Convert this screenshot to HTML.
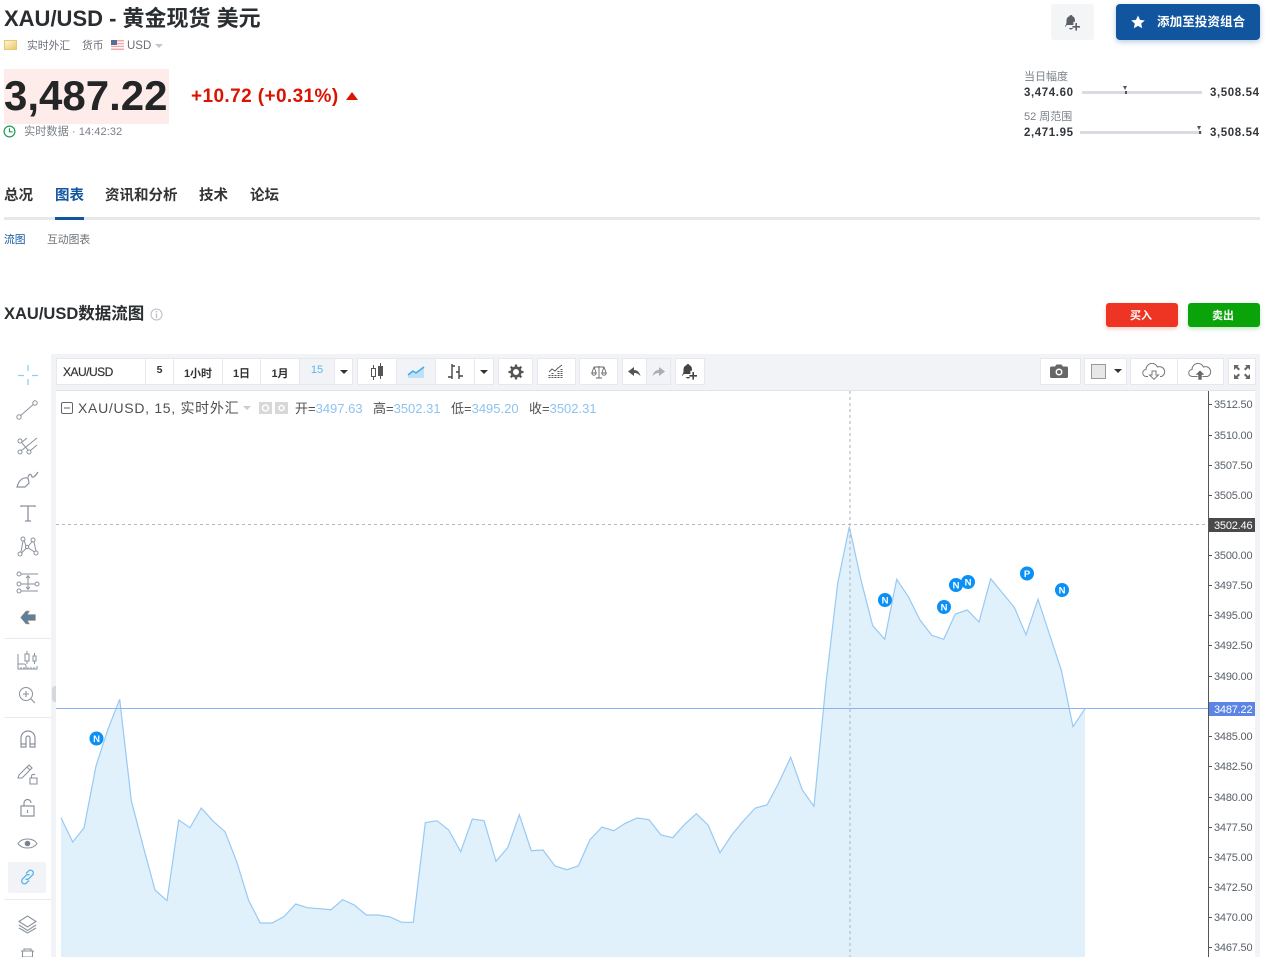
<!DOCTYPE html>
<html lang="zh"><head><meta charset="utf-8"><title>XAU/USD</title>
<style>
*{box-sizing:border-box}
html,body{margin:0;padding:0;width:1265px;height:957px;overflow:hidden;background:#fff}
body{position:relative;font-family:"Liberation Sans","Noto Sans CJK SC",sans-serif;color:#232526}
.a{position:absolute;white-space:nowrap}
.b{position:absolute;top:358px;height:27px;background:#fff;border:1px solid #e6e8ee;display:flex;align-items:center;justify-content:center;font-size:11px;color:#333;font-weight:bold}
.b svg{display:block}
.t{position:absolute;left:1214px;font-size:11px;line-height:12px;color:#5a6068;letter-spacing:-.2px}
.k{position:absolute;left:1208px;width:4px;height:1px;background:#555}
.l{position:absolute;left:0;top:0}
.lab{font-size:14px;color:#4f4f4f}
.v{color:#8fc3f0}
.s{font-size:11.5px;line-height:14px;font-weight:bold;color:#33373b;letter-spacing:.6px}
.m{font-size:11px;line-height:14px;color:#7b8087}
.tab{font-size:14.5px;line-height:18px;font-weight:bold;color:#333}
</style></head><body>

<div class="a" style="left:4px;top:6px;font-size:22px;line-height:25px;font-weight:bold;color:#2a2e31">XAU/USD - 黄金现货 美元</div>
<svg class="a" style="left:4px;top:40px" width="13" height="10"><defs><linearGradient id="g" x1="0" y1="0" x2="1" y2="1"><stop offset="0" stop-color="#fff8dc"/><stop offset="1" stop-color="#e9c766"/></linearGradient></defs><rect x=".5" y=".5" width="12" height="9" fill="url(#g)" stroke="#e5c870"/></svg>
<div class="a" style="left:27px;top:39px;font-size:10.8px;line-height:14px;color:#6a6f75">实时外汇</div>
<div class="a" style="left:82px;top:39px;font-size:10.8px;line-height:14px;color:#6a6f75">货币</div>
<svg class="a" style="left:111px;top:40px" width="13" height="10"><rect width="13" height="10" fill="#f3a6a6"/><rect y="1.5" width="13" height="1.4" fill="#fff"/><rect y="4.3" width="13" height="1.4" fill="#fff"/><rect y="7.1" width="13" height="1.4" fill="#fff"/><rect width="6" height="5" fill="#5a6a9a"/></svg>
<div class="a" style="left:127px;top:39px;font-size:11.5px;line-height:14px;color:#6a6f75">USD</div>
<div class="a" style="left:155px;top:44px;width:0;height:0;border:4px solid transparent;border-top:4px solid #c3c7cd;border-bottom:0"></div>

<div class="a" style="left:4px;top:69px;width:165px;height:55px;background:#fdecea"></div>
<div class="a" style="left:4px;top:72px;font-size:42px;line-height:48px;font-weight:bold;color:#232526">3,487.22</div>
<div class="a" style="left:191px;top:85px;font-size:19px;line-height:24px;color:#d91400;font-weight:bold;letter-spacing:.4px">+10.72 (+0.31%)</div>
<div class="a" style="left:346px;top:92px;width:0;height:0;border:6px solid transparent;border-bottom:8px solid #d91400;border-top:0"></div>
<svg class="a" style="left:3px;top:125px" width="13" height="13" fill="none" stroke="#1f9d55" stroke-width="1.2"><circle cx="6.500" cy="6.500" r="5.400"/><path d="M6.500 3.200V6.800H9.600"/></svg>
<div class="a" style="left:24px;top:125px;font-size:11.2px;line-height:14px;color:#7b8087">实时数据 · 14:42:32</div>

<div class="a" style="left:1051px;top:4px;width:43px;height:36px;background:#f4f5f6;border-radius:3px"></div>
<svg class="a" style="left:1064px;top:14px" width="18" height="17" fill="#5b5f66"><path d="M7 1c.9 0 1.400.6 1.500 1.300C10.500 3 11 4.800 11 7v.8H9.400V11H3L1 13v-1c1-1 1.500-2 1.500-5 0-2.400.8-4 3-4.700C5.600 1.600 6.100 1 7 1zM5 14h4c-.3 1-1 1.500-2 1.500S5.300 15 5 14z"/><path d="M13 9v3h3v1.600h-3v3h-1.600v-3h-3V12h3V9z"/></svg>
<div class="a" style="left:1116px;top:4px;width:144px;height:36px;background:#10559e;border-radius:4px;box-shadow:0 2px 6px rgba(16,85,158,.3)"></div>
<svg class="a" style="left:1131px;top:15px" width="14" height="14" fill="#fff"><path d="M7 .5l2 4.400 4.800.5-3.600 3.200 1 4.700L7 10.900l-4.200 2.400 1-4.700L.2 5.400 5 4.900z"/></svg>
<div class="a" style="left:1157px;top:14px;font-size:12.6px;line-height:16px;font-weight:bold;color:#fff">添加至投资组合</div>

<div class="a m" style="left:1024px;top:70px">当日幅度</div>
<div class="a s" style="left:1024px;top:86px">3,474.60</div>
<div class="a" style="left:1082px;top:91px;width:120px;height:3px;background:#d9dbe0"></div>
<div class="a" style="left:1123px;top:86px;width:0;height:0;border:2.500px solid transparent;border-top:4px solid #555;border-bottom:0"></div>
<div class="a" style="left:1125px;top:91px;width:1.500px;height:3px;background:#555"></div>
<div class="a s" style="left:1210px;top:86px">3,508.54</div>
<div class="a m" style="left:1024px;top:110px">52 周范围</div>
<div class="a s" style="left:1024px;top:126px">2,471.95</div>
<div class="a" style="left:1080px;top:131px;width:122px;height:3px;background:#d9dbe0"></div>
<div class="a" style="left:1197px;top:126px;width:0;height:0;border:2.500px solid transparent;border-top:4px solid #555;border-bottom:0"></div>
<div class="a" style="left:1199px;top:131px;width:2px;height:3px;background:#555"></div>
<div class="a s" style="left:1210px;top:126px">3,508.54</div>

<div class="a" style="left:4px;top:217px;width:1256px;height:3px;background:#e6e9eb"></div>
<div class="a" style="left:55px;top:217px;width:29px;height:3px;background:#10559e"></div>
<div class="a tab" style="left:4px;top:187px">总况</div>
<div class="a tab" style="left:55px;top:187px;color:#10559e">图表</div>
<div class="a tab" style="left:105px;top:187px">资讯和分析</div>
<div class="a tab" style="left:199px;top:187px">技术</div>
<div class="a tab" style="left:250px;top:187px">论坛</div>
<div class="a" style="left:4px;top:233px;font-size:10.8px;line-height:14px;color:#10559e">流图</div>
<div class="a" style="left:47px;top:233px;font-size:10.8px;line-height:14px;color:#6a6f75">互动图表</div>

<div class="a" style="left:4px;top:304px;font-size:16.5px;line-height:20px;font-weight:bold;color:#2a2e31">XAU/USD数据流图</div>
<svg class="a" style="left:150px;top:308px" width="13" height="13" fill="none" stroke="#b9bdc3"><circle cx="6.500" cy="6.500" r="5.500"/><path d="M6.500 5.500V10M6.500 3v1.400" stroke-width="1.300"/></svg>
<div class="a" style="left:1106px;top:303px;width:72px;height:24px;background:#ee3524;border-radius:3px;box-shadow:0 2px 4px rgba(238,53,36,.25);color:#fff;font-size:11px;font-weight:bold;line-height:26px;text-align:center;padding-right:2px">买入</div>
<div class="a" style="left:1188px;top:303px;width:72px;height:24px;background:#0aa30a;border-radius:3px;box-shadow:0 2px 4px rgba(10,163,10,.25);color:#fff;font-size:11px;font-weight:bold;line-height:26px;text-align:center;padding-right:2px">卖出</div>

<!-- chart frame -->
<div class="a" style="left:51px;top:354px;width:1209px;height:603px;background:#f1f3f6"></div>
<div class="a" style="left:56px;top:390px;width:1199px;height:567px;background:#fff;border-top:1px solid #e0e3e8"></div>

<!-- toolbar -->
<div class="b" style="left:56px;width:90px;justify-content:flex-start;padding-left:6px;font-weight:normal;font-size:12px;color:#333;letter-spacing:-.5px;-webkit-text-stroke:.2px #333">XAU/USD</div>
<div class="b" style="left:145px;width:29px;font-size:10.500px;padding-bottom:3px">5</div>
<div class="b" style="left:173px;width:50px;padding-top:2px">1小时</div>
<div class="b" style="left:222px;width:39px;padding-top:2px">1日</div>
<div class="b" style="left:260px;width:40px;padding-top:2px">1月</div>
<div class="b" style="left:299px;width:36px;background:#f1f3f6;color:#5fb4ec;padding-bottom:3px;font-weight:normal">15</div>
<div class="b" style="left:334px;width:19px"><i style="border:4px solid transparent;border-top:4px solid #333;border-bottom:0"></i></div>

<div class="b" style="left:357px;width:40px"><svg width="16" height="18" fill="none" stroke="#555"><rect x="2.500" y="5.500" width="4" height="8"/><path d="M4.500 2v3.500M4.500 13.500V17"/><rect x="9.500" y="3.500" width="4" height="9" fill="#555"/><path d="M11.500 0v3.500M11.500 12.500V16"/></svg></div>
<div class="b" style="left:396px;width:40px;background:#f1f3f6"><svg width="18" height="12"><path d="M1 10l5-4 3 2 8-6v10H1z" fill="#bfe0f5"/><path d="M1 9l5-4 3 2 8-6" fill="none" stroke="#3fa7ea" stroke-width="1.500"/></svg></div>
<div class="b" style="left:435px;width:40px"><svg width="17" height="18" fill="none" stroke="#444" stroke-width="1.400"><path d="M5 1v15M5 14H1M5 3h3M12 3v13M12 9H9M12 13h4"/></svg></div>
<div class="b" style="left:474px;width:20px"><i style="border:4px solid transparent;border-top:4px solid #333;border-bottom:0"></i></div>
<div class="b" style="left:498px;width:35px"><svg width="16" height="16" viewBox="0 0 16 16"><circle cx="8" cy="8" r="4.300" fill="none" stroke="#555" stroke-width="2.600"/><path d="M8 .5v3M8 12.500v3M.5 8h3M12.500 8h3M2.700 2.700l2.100 2.100M11.200 11.200l2.100 2.100M13.300 2.700l-2.100 2.100M4.800 11.200l-2.100 2.100" stroke="#555" stroke-width="2.300"/></svg></div>
<div class="b" style="left:537px;width:39px"><svg width="17" height="15" fill="none" stroke="#555"><path d="M1.500 14V10M4.500 14V8M7.500 14V10M10.500 14V6M13.500 14V4" stroke-dasharray="1 1" stroke-width="2"/><path d="M1 8l3-3 3 2 3-3 4-3" stroke-width=".9"/></svg></div>
<div class="b" style="left:579px;width:39px"><svg width="16" height="14" fill="none" stroke="#666"><path d="M3 2h10M8 1v12M5 13h6M3 2l-2.200 6M3 2l2.200 6M13 2l-2.200 6M13 2l2.200 6M.8 8a2.200 2.200 0 0 0 4.400 0zM10.800 8a2.200 2.200 0 0 0 4.400 0z" stroke-width=".9"/></svg></div>
<div class="b" style="left:622px;width:25px"><svg width="13" height="10" fill="#555"><path d="M6 0L0 4.500 6 9V6c3 0 5 1 6.500 3.500C12 6 10 3 6 3z"/></svg></div>
<div class="b" style="left:646px;width:25px;background:#f1f3f6"><svg width="13" height="10" fill="#a9adb3"><path d="M7 0l6 4.500L7 9V6C4 6 2 7 .5 9.500 1 6 3 3 7 3z"/></svg></div>
<div class="b" style="left:675px;width:30px"><svg width="18" height="17" fill="#444"><path d="M7 1c.9 0 1.400.6 1.500 1.300C10.500 3 11 4.800 11 7v.8H9.400V11H3L1 13v-1c1-1 1.500-2 1.500-5 0-2.400.8-4 3-4.700C5.600 1.600 6.100 1 7 1zM5 14h4c-.3 1-1 1.500-2 1.500S5.300 15 5 14z"/><path d="M13 9v3h3v1.600h-3v3h-1.600v-3h-3V12h3V9z"/></svg></div>

<div class="b" style="left:1040px;width:41px;padding-right:3px;padding-bottom:1px"><svg width="18" height="14" fill="#666"><path d="M1.500 2.500H5L6.500.5h5L13 2.500h3.500A1.500 1.500 0 0 1 18 4v8.500a1.500 1.500 0 0 1-1.500 1.500h-15A1.500 1.500 0 0 1 0 12.500V4a1.500 1.500 0 0 1 1.500-1.500z"/><circle cx="9" cy="8" r="3.500" fill="#fff"/><circle cx="9" cy="8" r="2" fill="#666"/></svg></div>
<div class="b" style="left:1084px;width:43px;justify-content:flex-start;padding-left:6px;padding-bottom:1px"><span style="display:block;width:15px;height:15px;background:#e7e7e7;border:1px solid #999;margin-right:8px"></span><i style="border:4px solid transparent;border-top:4px solid #333;border-bottom:0"></i></div>
<div class="b" style="left:1130px;width:48px"><svg width="24" height="17" fill="none" stroke="#777"><path d="M6 13.500H4.500a3.500 3.500 0 0 1-.5-7A6 6 0 0 1 15.500 4 4.800 4.800 0 0 1 19.500 13.500H18"/><path d="M10 8h4v4h2.500L12 16.300 7.500 12H10z" fill="#fff"/></svg></div>
<div class="b" style="left:1177px;width:47px;padding-right:2px"><svg width="24" height="17" fill="none" stroke="#777"><path d="M6 13.500H4.500a3.500 3.500 0 0 1-.5-7A6 6 0 0 1 15.500 4 4.800 4.800 0 0 1 19.500 13.500H6"/><path d="M10 17v-5H7l5-5 5 5h-3v5z" fill="#666" stroke="#fff" stroke-width=".6"/></svg></div>
<div class="b" style="left:1228px;width:28px"><svg width="16" height="14" fill="#666"><path d="M0 0h5L3.500 1.500 6 4 4.500 5.500 2 3 0 5zM16 0h-5l1.500 1.500L10 4l1.500 1.500L14 3l2 2zM0 14h5l-1.500-1.500L6 10 4.500 8.500 2 11l-2-2zM16 14h-5l1.500-1.500L10 10l1.500-1.500L14 11l2-2z"/></svg></div>

<!-- chart -->
<svg class="l" width="1265" height="957" style="position:absolute">
<path d="M61 957V817.700L72.700 842 84 828 96 766 107.700 730 119.700 699.300 131.300 800.700 143.300 846.700 155 890 167 900.700 178.700 820 190 827.700 201.300 808 213.300 821.300 225 831.700 236.700 861.700 248.700 900.700 260.300 923 272 923 284 916.700 295.700 904 307.300 907.700 319.300 908.700 331 909.700 342.700 899.700 354.300 905 366.300 915 378.300 915 390 917 401.700 922.300 413.300 922.300 425.300 822.700 437 820.700 448.700 830 460.700 851.700 472.300 819 484 820.700 496 861.300 507.700 847.700 519.300 814.700 531.300 850.700 543 850 555 866 566.700 869.700 578.300 866 590 839.700 602 827 613.700 830.700 625.300 823.300 637.300 818 649 819.700 661 835 672.700 837.700 684.300 824.700 696.300 813.700 708 825 720 852.700 731.700 835 743.300 821 755.300 808 767 805 778.700 783 790.700 757.300 802.300 790 814 806.300 826 683 837.700 583.300 849.300 526.700 861 580 872.700 625.700 884.700 639.300 896.700 579.300 908.300 596.700 920 620 931.700 635.300 943.700 639.300 955.300 614 967.300 610 979 622 990.700 578.700 1002.700 593.300 1014.300 607.300 1026 634.700 1038 599.300 1049.700 635 1061.300 670 1073 726.700 1085 708.700V957z" fill="#e1f1fb"/>
<path d="M61 817.700L72.700 842 84 828 96 766 107.700 730 119.700 699.300 131.300 800.700 143.300 846.700 155 890 167 900.700 178.700 820 190 827.700 201.300 808 213.300 821.300 225 831.700 236.700 861.700 248.700 900.700 260.300 923 272 923 284 916.700 295.700 904 307.300 907.700 319.300 908.700 331 909.700 342.700 899.700 354.300 905 366.300 915 378.300 915 390 917 401.700 922.300 413.300 922.300 425.300 822.700 437 820.700 448.700 830 460.700 851.700 472.300 819 484 820.700 496 861.300 507.700 847.700 519.300 814.700 531.300 850.700 543 850 555 866 566.700 869.700 578.300 866 590 839.700 602 827 613.700 830.700 625.300 823.300 637.300 818 649 819.700 661 835 672.700 837.700 684.300 824.700 696.300 813.700 708 825 720 852.700 731.700 835 743.300 821 755.300 808 767 805 778.700 783 790.700 757.300 802.300 790 814 806.300 826 683 837.700 583.300 849.300 526.700 861 580 872.700 625.700 884.700 639.300 896.700 579.300 908.300 596.700 920 620 931.700 635.300 943.700 639.300 955.300 614 967.300 610 979 622 990.700 578.700 1002.700 593.300 1014.300 607.300 1026 634.700 1038 599.300 1049.700 635 1061.300 670 1073 726.700 1085 708.700" fill="none" stroke="#97c9f5" stroke-width="1.200"/>
<path d="M850 391V957" stroke="#aeb3b8" stroke-dasharray="3 3"/>
<path d="M56 524.500H1208" stroke="#b5b9bd" stroke-dasharray="3 3"/>
<path d="M56 708.500H1208" stroke="#8fb0f3"/>
<g font-family="Liberation Sans" font-size="9.500" font-weight="bold" text-anchor="middle" fill="#fff">
<g><circle cx="96.500" cy="738.500" r="7" fill="#0b90f5"/><text x="96.500" y="742">N</text></g>
<g><circle cx="885" cy="600" r="7" fill="#0b90f5"/><text x="885" y="603.500">N</text></g>
<g><circle cx="944" cy="607" r="7" fill="#0b90f5"/><text x="944" y="610.500">N</text></g>
<g><circle cx="956" cy="585" r="7" fill="#0b90f5"/><text x="956" y="588.500">N</text></g>
<g><circle cx="968" cy="582" r="7" fill="#0b90f5"/><text x="968" y="585.500">N</text></g>
<g><circle cx="1027" cy="573.500" r="7" fill="#0b90f5"/><text x="1027" y="577">P</text></g>
<g><circle cx="1062" cy="590" r="7" fill="#0b90f5"/><text x="1062" y="593.500">N</text></g>
</g>
</svg>

<!-- legend -->
<svg class="a" style="left:61px;top:402px" width="12" height="12" fill="none" stroke="#666"><rect x=".5" y=".5" width="11" height="11" rx="1.500"/><path d="M3 6h6"/></svg>
<div class="a lab" style="left:78px;top:400px;line-height:17px;letter-spacing:.7px">XAU/USD, 15, 实时外汇</div>
<div class="a" style="left:243px;top:406px;border:4px solid transparent;border-top:4px solid #c9ccd1;border-bottom:0"></div>
<div class="a" style="left:259px;top:402px;width:13px;height:12px;background:#d8d8d8"></div>
<div class="a" style="left:275px;top:402px;width:13px;height:12px;background:#d8d8d8"></div>
<svg class="a" style="left:259px;top:402px" width="30" height="12" fill="none" stroke="#fff" stroke-width="1.500"><circle cx="6.500" cy="6" r="3"/><circle cx="22.500" cy="6" r="2.500"/></svg>
<div class="a lab" style="left:295px;top:401px;line-height:16px;font-size:13px">开=<span class="v">3497.63</span></div>
<div class="a lab" style="left:373px;top:401px;line-height:16px;font-size:13px">高=<span class="v">3502.31</span></div>
<div class="a lab" style="left:451px;top:401px;line-height:16px;font-size:13px">低=<span class="v">3495.20</span></div>
<div class="a lab" style="left:529px;top:401px;line-height:16px;font-size:13px">收=<span class="v">3502.31</span></div>

<!-- axis -->
<div class="a" style="left:1208px;top:391px;width:1px;height:566px;background:#555"></div>
<div class="k" style="top:404px"></div><div class="t" style="top:399px">3512.50</div>
<div class="k" style="top:435px"></div><div class="t" style="top:430px">3510.00</div>
<div class="k" style="top:465px"></div><div class="t" style="top:460px">3507.50</div>
<div class="k" style="top:495px"></div><div class="t" style="top:490px">3505.00</div>
<div class="k" style="top:555px"></div><div class="t" style="top:550px">3500.00</div>
<div class="k" style="top:585px"></div><div class="t" style="top:580px">3497.50</div>
<div class="k" style="top:615px"></div><div class="t" style="top:610px">3495.00</div>
<div class="k" style="top:645px"></div><div class="t" style="top:640px">3492.50</div>
<div class="k" style="top:676px"></div><div class="t" style="top:671px">3490.00</div>
<div class="k" style="top:736px"></div><div class="t" style="top:731px">3485.00</div>
<div class="k" style="top:766px"></div><div class="t" style="top:761px">3482.50</div>
<div class="k" style="top:797px"></div><div class="t" style="top:792px">3480.00</div>
<div class="k" style="top:827px"></div><div class="t" style="top:822px">3477.50</div>
<div class="k" style="top:857px"></div><div class="t" style="top:852px">3475.00</div>
<div class="k" style="top:887px"></div><div class="t" style="top:882px">3472.50</div>
<div class="k" style="top:917px"></div><div class="t" style="top:912px">3470.00</div>
<div class="k" style="top:947px"></div><div class="t" style="top:942px">3467.50</div>
<div class="a" style="left:1209px;top:518px;width:46px;height:14px;background:#4a4a4a"></div>
<div class="t" style="top:520px;color:#fff">3502.46</div>
<div class="a" style="left:1209px;top:702px;width:46px;height:14px;background:#5b84e4"></div>
<div class="t" style="top:704px;color:#fff">3487.22</div>

<!-- left tools -->
<svg class="l" width="56" height="957" style="position:absolute" fill="none" stroke="#8a929e" stroke-width="1">
<path d="M28 365v6M28 379v6M18 375.500h6M32 375.500h6" stroke="#8ed0f0" stroke-width="1.300"/>
<circle cx="19" cy="417" r="2.200"/><circle cx="35" cy="403" r="2.200"/><path d="M20.700 415.500L33.300 404.500"/>
<circle cx="20" cy="452" r="2"/><circle cx="29" cy="452" r="2"/><circle cx="20" cy="441" r="2"/><path d="M21.500 450.500L37 438M30.500 450.500L37 445M21.500 442.500L27 438M22 443l6 7"/>
<path d="M17 487c2-7 6-10 11-9l1 5-4 4zM28 477c1-3 3-4 4 0 2 1 4-2 6-5" stroke-width="1.200"/>
<path d="M21 507v-1h14v1M28 506v15M25 521h6" stroke-width="1.300"/>
<circle cx="20" cy="554" r="2"/><circle cx="23" cy="539" r="2"/><circle cx="27" cy="547" r="1.600"/><circle cx="33" cy="540" r="2"/><circle cx="36" cy="553" r="2"/><path d="M21 552l2-11M24 540l2 6M28.500 546l4-5M34 542l2 9M21.500 553l5-5M28.500 548l6 4"/>
<circle cx="19" cy="574" r="2"/><circle cx="19" cy="584" r="2"/><circle cx="19" cy="591" r="2"/><circle cx="37" cy="584" r="2"/><path d="M21 574h17M21 584h14M21 591h17M28 575v15M26 578l2-2 2 2M26 587l2 2 2-2"/>
<path d="M35.500 614.500H27.500l2-3.500h-3.500L20.500 617.500 26 624h3.500l-2-3.500h8z" fill="#5f7f9f" stroke="#c99a70" stroke-width=".5"/>
<path d="M4 638.500H51M4 717.500H51M4 899.500H51" stroke="#e8ecf2"/>
<path d="M18 654v15h19v-3M18 664h6a2 2 0 0 1 2 2v3M21 669v-2M24 669v-2M28 669v-2M31 669v-2M34 669v-2"/><rect x="25" y="654" width="4" height="7"/><path d="M27 651v3M27 661v3"/><rect x="33" y="656" width="3" height="5"/><path d="M34.500 653v3M34.500 661v3"/>
<circle cx="26" cy="694" r="6.500"/><path d="M31 699l4 4M23 694h6M26 691v6" stroke-width="1.100"/>
<path d="M21 747v-9a7 7 0 0 1 14 0v9h-5v-9a2 2 0 0 0-4 0v9zM21 744h5M30 744h5" stroke-width="1.200"/>
<path d="M18 778l1-3 10-10 3 3-10 10zM27 767l3 3M30 778h7v6h-7zM31.500 778v-2a2 2 0 0 1 3.500-1" stroke-width="1.100"/>
<path d="M21 806h13v10H21zM24 806v-3a3.500 3.500 0 0 1 7 0M27.500 810v3" stroke-width="1.200"/>
<path d="M18 843.500c4-6 15-6 19 0-4 6-15 6-19 0z" stroke-width="1.100"/><circle cx="27.500" cy="843.500" r="2.800" fill="#7a8290" stroke="none"/>
<path d="M19 921.500l8.500-5.500 8.500 5.500-8.500 5.500zM19 925l8.500 5.500 8.500-5.500M19 928l8.500 5 8.500-5" stroke-width="1.100"/>
<path d="M21 951h13M24 951v-2h7v2M22.500 951v6h10v-6" stroke-width="1.100"/>
</svg>
<div class="a" style="left:8px;top:862px;width:38px;height:31px;background:#f1f3f6;border-radius:2px"></div>
<svg class="a" style="left:19px;top:869px" width="17" height="16" fill="none" stroke="#5ab4ec" stroke-width="1.300"><path d="M7 4.500l2.500-2.500a2.800 2.800 0 0 1 4 4L10 9.500a2.800 2.800 0 0 1-3.500.4"/><path d="M10 11.500L7.500 14a2.800 2.800 0 0 1-4-4L7 6.500a2.800 2.800 0 0 1 3.500-.4"/></svg>
<div class="a" style="left:52px;top:686px;width:4px;height:16px;background:#d4d7dc;border-radius:3px 0 0 3px"></div>
</body></html>
